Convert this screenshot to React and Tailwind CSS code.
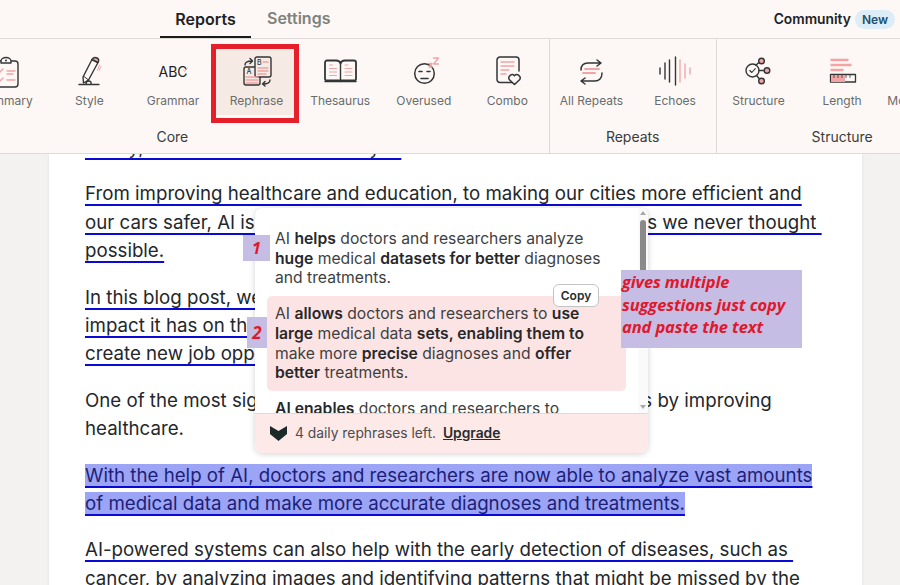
import React from "react";

const dark = "#333536";
const pink = "#f2a3a3";

const Svg = ({ children }) => (
  <svg width="40" height="32" viewBox="0 0 40 32" fill="none" stroke={dark} strokeWidth="1.4" strokeLinecap="round" strokeLinejoin="round">
    {children}
  </svg>
);

const SummaryIcon = () => (
  <Svg>
    <rect x="8" y="5" width="24" height="26" rx="3" fill="#fdf8f5" />
    <path d="M15 5a5 3.5 0 0 1 10 0v2H15z" fill="#fdf8f5" />
    <circle cx="20" cy="4.5" r="1" fill={dark} stroke="none" />
    <path d="M11 15l2 2 4-4M11 24l2 2 4-4M21 15h8M21 18h6M21 24h8" stroke={pink} />
  </Svg>
);

const StyleIcon = () => (
  <Svg>
    <path d="M23 3.500l6 3-9.500 17.500-5 3-.5-6z" />
    <path d="M23 3.500c1-2 3-2.500 5-1.500s2.200 2.500 1 4.500z" fill={pink} />
    <path d="M15 20.500l4.500 3.500" strokeWidth="1" />
    <path d="M30.500 9l-2 5M32 10.500l-2 4" stroke={pink} strokeWidth="1" />
    <path d="M10 28.500h20M17 28c0-4 6-4 5 0" />
  </Svg>
);

const GrammarIcon = () => (
  <Svg>
    <text x="5.500" y="20.500" fontSize="14" fontFamily="Inter, sans-serif" fontWeight="400" fill="#222" stroke="none">ABC</text>
    <path d="M30.500 14l1.200 1.500 2.500-3.500" stroke={pink} strokeWidth="1" />
  </Svg>
);

const RephraseIcon = () => (
  <Svg>
    <rect x="7" y="11" width="16" height="18" rx="2" fill="#f6ebe4" />
    <rect x="18" y="1" width="16" height="20" rx="2" fill="#f6ebe4" />
    <text x="9.500" y="18" fontSize="7" fontFamily="Inter, sans-serif" fontWeight="500" fill={dark} stroke="none">A</text>
    <text x="20" y="8.500" fontSize="7" fontFamily="Inter, sans-serif" fontWeight="500" fill={dark} stroke="none">B</text>
    <path d="M9 21h12M9 24h12M9 27h12M26 6h5M21 12h10M21 15h10M21 18h8" stroke={pink} />
    <path d="M8 9c0-3 2-4 7-4M13 2.500l2.500 2.500-2.500 2.500M33 24c0 3-2 4-7 4M28 25.500l-2.500 2.500 2.500 2" />
  </Svg>
);

const ThesaurusIcon = () => (
  <Svg>
    <path d="M5 6.500c0-1 .8-2 2-2h9c2 0 4 1 4.500 3 .5-2 2.500-3 4.500-3h9c1.200 0 2 1 2 2V23c0 1-.8 1.500-2 1.500H7c-1.200 0-2-.5-2-1.500z" strokeWidth="1.800" />
    <path d="M20.500 7.500v18" />
    <path d="M5 25.500h31" strokeWidth="1.500" />
    <path d="M9.500 9h3M9.500 12.500h7M9.500 16h7M9.500 19.500h7M25 9h3M25 12.500h7M25 16h7M25 19.500h7" stroke={pink} strokeWidth="1.100" />
  </Svg>
);

const OverusedIcon = () => (
  <Svg>
    <circle cx="20.500" cy="17.500" r="9.800" strokeWidth="1.500" />
    <path d="M15 15.500h3M23 15.500h3M17 22.500h7" strokeWidth="1.600" />
    <path d="M25 7.500h3l-3 3.500h3M29.500 2h5l-5 6h5" stroke={pink} strokeWidth="1.300" />
  </Svg>
);

const ComboIcon = () => (
  <Svg>
    <path d="M26 26.500H13a3 3 0 0 1-3-3V4a3 3 0 0 1 3-3h16a3 3 0 0 1 3 3v11" strokeWidth="1.500" />
    <path d="M14 6h13M14 10h13M14 14h8M14 18h5" stroke={pink} strokeWidth="1.300" />
    <path d="M27.500 28.500l-5.300-5a3.300 3.300 0 0 1 5.300-3.800 3.300 3.300 0 0 1 5.300 3.800z" fill="#fdf8f5" strokeWidth="1.500" />
  </Svg>
);

const AllRepeatsIcon = () => (
  <Svg>
    <path d="M10 14c0-5 3-7 7-7h13M26 4l4 3-4 3M31 17c0 5-3 8-7 8H10M14 22l-4 3 4 3" strokeWidth="1.500" />
    <path d="M14 13h14M12 17h12" stroke={pink} strokeWidth="1.800" />
  </Svg>
);

const EchoesIcon = () => (
  <Svg>
    <path d="M5 12v6M10 7v16M14.500 4v22M20.500 1v28" strokeWidth="1.400" />
    <path d="M25 4v22M30 8v14M35 12v6" stroke={pink} strokeWidth="1.300" />
  </Svg>
);

const StructureIcon = () => (
  <Svg>
    <circle cx="14.500" cy="14.500" r="6.500" />
    <path d="M11.800 14.500l2 2 3.500-3.800" strokeWidth="1.100" />
    <path d="M18 9l4-3.500M21 14.500h8M18.500 19.500l3.500 4" />
    <circle cx="23.500" cy="5" r="2.800" fill={pink} />
    <circle cx="29" cy="14.500" r="2.800" fill={pink} />
    <circle cx="23.500" cy="25" r="2.800" fill={pink} />
  </Svg>
);

const LengthIcon = () => (
  <Svg>
    <path d="M8.500 4h18M8.500 9h21M8.500 14h13" stroke={pink} strokeWidth="2.500" strokeLinecap="butt" />
    <rect x="8.500" y="18.500" width="25" height="7.500" fill="#fdf8f5" strokeWidth="1.300" />
    <rect x="9" y="19" width="14" height="7" fill={pink} stroke="none" />
    <path d="M12 19v2.500M16 19v2.500M20 19v2.500M24 19v2.500M28 19v2.500" strokeWidth="0.800" />
  </Svg>
);

const ToolItem = ({ icon, label, active }) => (
  <div className={`flex w-[83.6px] shrink-0 flex-col items-center pt-[12px] ${active ? "bg-[#f6ebe4]" : ""}`}>
    <div className="h-[32px] w-[40px]">{icon}</div>
    <span className="mt-[5px] whitespace-nowrap text-[12px] leading-[16px] text-[#6a6c6c]">{label}</span>
  </div>
);

const ToolGroup = ({ label, children, className }) => (
  <div className={`flex shrink-0 flex-col border-r border-[#dedad7] ${className}`}>
    <div className="mt-[5px] flex h-[71px]">{children}</div>
    <div className="mt-[13px] text-center text-[14px] leading-[18px] text-[#3a3c3d]">{label}</div>
  </div>
);

const Line = ({ children, blue }) => (
  <div className="h-[28.4px] whitespace-pre">
    <span
      className={`underline decoration-[#0a0ad6] decoration-[2px] underline-offset-[4px] [text-decoration-skip-ink:none] ${blue ? "bg-[#9ca4f6] text-[#1c1f78]" : ""}`}
    >
      {children}
    </span>
  </div>
);

const Suggestion = ({ children, active }) => (
  <div className={`w-[359px] rounded-[5px] py-[8px] pl-[8px] pr-[16px] text-[15.7px] leading-[19.7px] text-[#3d3f41] ${active ? "bg-[#fde4e4]" : ""}`}>
    {children}
  </div>
);

const B = ({ children }) => <b className="font-semibold text-[#26282a]">{children}</b>;

const Popup = () => (
  <div className="absolute left-[206px] top-[54px] flex h-[245px] w-[393px] flex-col overflow-hidden rounded-[8px] bg-white shadow-[0_1px_6px_rgba(0,0,0,0.18)]">
    <div className="flex h-[206px] shrink-0 border-b border-[#dcdcdc]">
      <div className="min-w-0 flex-1 overflow-hidden pl-[12px] pt-[13px]">
        <Suggestion>
          AI <B>helps</B> doctors and researchers analyze <B>huge</B> medical <B>datasets for better</B> diagnoses and treatments.
        </Suggestion>
        <Suggestion active>
          AI <B>allows</B> doctors and researchers to <B>use large</B> medical data <B>sets, enabling them to</B> make more <B>precise</B> diagnoses and <B>offer better</B> treatments.
        </Suggestion>
        <Suggestion>
          <B>AI enables</B> doctors and researchers to quickly analyze large medical datasets.
        </Suggestion>
      </div>
      <div className="relative w-[10px] shrink-0 bg-[#fafafa]">
        <div className="mx-auto mt-[3px] h-0 w-0 border-x-[3.5px] border-b-[4px] border-x-transparent border-b-[#a8a8a8]" />
        <div className="mx-auto mt-[5px] h-[82px] w-[6px] rounded-full bg-[#8a8a8a]" />
        <div className="absolute bottom-[4px] left-[1.500px] h-0 w-0 border-x-[3.5px] border-t-[4px] border-x-transparent border-t-[#a8a8a8]" />
      </div>
    </div>
    <div className="flex flex-1 items-center bg-[#fde9e8] pl-[15px] text-[13.8px]">
      <svg width="17" height="15" viewBox="0 0 17 15" fill="#1c2a2a">
        <path d="M0 0l8.500 5L17 0v8l-8.500 7L0 8z" />
      </svg>
      <span className="ml-[8px] text-[#4a4c4e]">4 daily rephrases left.</span>
      <span className="ml-[7px] font-semibold text-[#2a2c2e] underline">Upgrade</span>
    </div>
  </div>
);

export default function App() {
  return (
    <div className="relative flex h-[585px] w-[900px] flex-col overflow-hidden font-['Inter',sans-serif]">
      <div className="relative z-10 flex h-[39px] shrink-0 items-start border-b border-[#dedad7] bg-[#fdf8f5]">
        <div className="ml-[160px] flex h-[38px] w-[91px] items-center justify-center border-b-2 border-[#1c1c1c] pt-[2px] text-[16px] font-semibold text-[#1f2122]">
          Reports
        </div>
        <div className="ml-[16px] flex h-[36px] items-center text-[16px] font-semibold text-[#7d827e]">Settings</div>
        <div className="ml-auto mr-[5px] flex h-[38px] items-center gap-[4px]">
          <span className="text-[13.8px] font-semibold text-[#202224]">Community</span>
          <span className="rounded-full bg-[#dcedf8] px-[7px] py-[2px] text-[12px] font-semibold leading-[15px] text-[#24506f]">New</span>
        </div>
      </div>

      <div className="relative z-10 flex h-[115px] shrink-0 border-b border-[#dedad7] bg-[#fdf8f5] pl-0">
        <ToolGroup label="Core" className="ml-[-204px] w-[753.700px]">
          <div className="w-[168px] shrink-0" />
          <ToolItem icon={<SummaryIcon />} label="Summary" />
          <ToolItem icon={<StyleIcon />} label="Style" />
          <ToolItem icon={<GrammarIcon />} label="Grammar" />
          <ToolItem icon={<RephraseIcon />} label="Rephrase" active />
          <ToolItem icon={<ThesaurusIcon />} label="Thesaurus" />
          <ToolItem icon={<OverusedIcon />} label="Overused" />
          <ToolItem icon={<ComboIcon />} label="Combo" />
        </ToolGroup>
        <ToolGroup label="Repeats" className="w-[167px]">
          <ToolItem icon={<AllRepeatsIcon />} label="All Repeats" />
          <ToolItem icon={<EchoesIcon />} label="Echoes" />
        </ToolGroup>
        <ToolGroup label="Structure" className="w-[251px] border-r-0">
          <ToolItem icon={<StructureIcon />} label="Structure" />
          <ToolItem icon={<LengthIcon />} label="Length" />
          <ToolItem label="More Reports" />
        </ToolGroup>
      </div>

      <div className="relative min-h-0 flex-1 overflow-hidden bg-[#f3f2f0]">
        <div className="relative ml-[49px] flow-root h-[600px] w-[813px] bg-white pl-[36px] text-[18.7px] leading-[28.4px] text-[#23272b] shadow-[0_0_3px_rgba(0,0,0,0.08)]">
          <div className="mt-[-20px] space-y-[18px]">
            <div>
              <Line>Today, AI shifts how we all live by it.</Line>
            </div>
            <div>
              <Line>From improving healthcare and education, to making our cities more efficient and</Line>
              <Line>our cars safer, AI is transforming our lives and our planet in ways we never thought </Line>
              <Line>possible.</Line>
            </div>
            <div>
              <Line>In this blog post, we will explore the ways AI is used and the</Line>
              <Line>impact it has on the world, from the way it helps</Line>
              <Line>create new job opportunities to the way</Line>
            </div>
            <div>
              <div className="h-[28.4px] whitespace-pre">One of the most significant ways that AI is changing our world is by improving</div>
              <div className="h-[28.4px]">healthcare.</div>
            </div>
            <div>
              <Line blue>With the help of AI, doctors and researchers are now able to analyze vast amounts</Line>
              <Line blue>of medical data and make more accurate diagnoses and treatments.</Line>
            </div>
            <div>
              <Line>AI-powered systems can also help with the early detection of diseases, such as </Line>
              <Line>cancer, by analyzing images and identifying patterns that might be missed by the</Line>
            </div>
          </div>
          <Popup />
        </div>
      </div>

      {/* annotations drawn on top of the screenshot */}
      <div className="absolute left-[211px] top-[44px] z-20 h-[79px] w-[88px] border-[5px] border-[#e6202b]" />
      <div className="absolute left-[243px] top-[235px] z-20 flex h-[26px] w-[27px] items-center justify-center bg-[#c5bde3] font-['Open_Sans',sans-serif] text-[16px] font-bold italic text-[#e0182d]">1</div>
      <div className="absolute left-[247px] top-[317px] z-20 flex h-[31px] w-[20px] items-center justify-center bg-[#c5bde3] font-['Open_Sans',sans-serif] text-[17px] font-bold italic text-[#e0182d]">2</div>
      <div className="absolute left-[553px] top-[284px] z-20 flex h-[23px] w-[46px] items-center justify-center rounded-[6px] border border-[#c4c4c4] bg-white text-[12px] font-semibold text-[#2a2c2e]">Copy</div>
      <div className="absolute left-[621px] top-[270px] z-20 h-[78px] w-[181px] bg-[#c5bde3] pl-[1px] pt-[1px] font-['Open_Sans',sans-serif] text-[16.5px] font-bold italic leading-[22.5px] tracking-[-0.12px] text-[#e0182d]">
        gives multiple
        <br />
        suggestions just copy
        <br />
        and paste the text
      </div>
    </div>
  );
}
